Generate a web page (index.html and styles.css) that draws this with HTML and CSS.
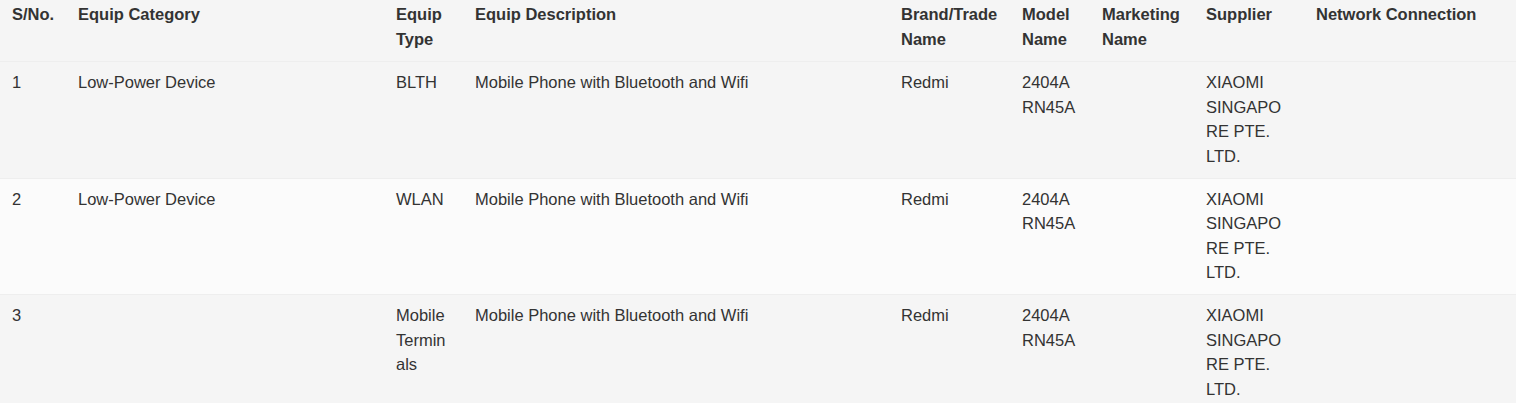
FILE: index.html
```html
<!DOCTYPE html>
<html>
<head>
<meta charset="utf-8">
<link rel="stylesheet" href="styles.css">
</head>
<body>
<table class="equip-table">
  <colgroup>
    <col class="c-sno"><col class="c-cat"><col class="c-type"><col class="c-desc"><col class="c-brand"><col class="c-model"><col class="c-mkt"><col class="c-sup"><col class="c-net">
  </colgroup>
  <thead>
    <tr>
      <th class="tight">S/No.</th>
      <th>Equip Category</th>
      <th>Equip Type</th>
      <th>Equip Description</th>
      <th class="tight">Brand/Trade Name</th>
      <th>Model Name</th>
      <th class="tight">Marketing Name</th>
      <th class="sup">Supplier</th>
      <th>Network Connection</th>
    </tr>
  </thead>
  <tbody>
    <tr class="odd">
      <td>1</td>
      <td>Low-Power Device</td>
      <td>BLTH</td>
      <td>Mobile Phone with Bluetooth and Wifi</td>
      <td>Redmi</td>
      <td>2404A RN45A</td>
      <td></td>
      <td class="sup">XIAOMI SINGAPORE PTE. LTD.</td>
      <td></td>
    </tr>
    <tr class="even">
      <td>2</td>
      <td>Low-Power Device</td>
      <td>WLAN</td>
      <td>Mobile Phone with Bluetooth and Wifi</td>
      <td>Redmi</td>
      <td>2404A RN45A</td>
      <td></td>
      <td class="sup">XIAOMI SINGAPORE PTE. LTD.</td>
      <td></td>
    </tr>
    <tr class="odd">
      <td>3</td>
      <td></td>
      <td>Mobile Terminals</td>
      <td>Mobile Phone with Bluetooth and Wifi</td>
      <td>Redmi</td>
      <td>2404A RN45A</td>
      <td></td>
      <td class="sup">XIAOMI SINGAPORE PTE. LTD.</td>
      <td></td>
    </tr>
  </tbody>
</table>
</body>
</html>
```

FILE: styles.css
```css
html, body {
  margin: 0;
  padding: 0;
  background: #f5f5f5;
}
body {
  font-family: "Liberation Sans", Arial, sans-serif;
  font-size: 16.5px;
  color: #333333;
}
.equip-table {
  width: 1516px;
  table-layout: fixed;
  border-collapse: collapse;
  border-spacing: 0;
}
.c-sno { width: 66px; }
.c-cat { width: 318px; }
.c-type { width: 79px; }
.c-desc { width: 426px; }
.c-brand { width: 121px; }
.c-model { width: 80px; }
.c-mkt { width: 104px; }
.c-sup { width: 110px; }
.c-net { width: 212px; }
.equip-table th,
.equip-table td {
  text-align: left;
  vertical-align: top;
  line-height: 24.6px;
  padding: 8px 12px 9px 12px;
  overflow-wrap: anywhere;
}
.equip-table th {
  font-weight: bold;
  padding-top: 2px;
  padding-bottom: 10px;
  background: #f5f5f5;
}
.equip-table th.tight {
  padding-right: 4px;
}
.equip-table .sup {
  padding-right: 20px;
}
.equip-table th.sup {
  padding-right: 12px;
}
.equip-table tbody tr {
  border-top: 1px solid #eeeeee;
}
.equip-table tr.odd td {
  background: #f5f5f5;
}
.equip-table tr.even td {
  background: #fbfbfb;
}
```
